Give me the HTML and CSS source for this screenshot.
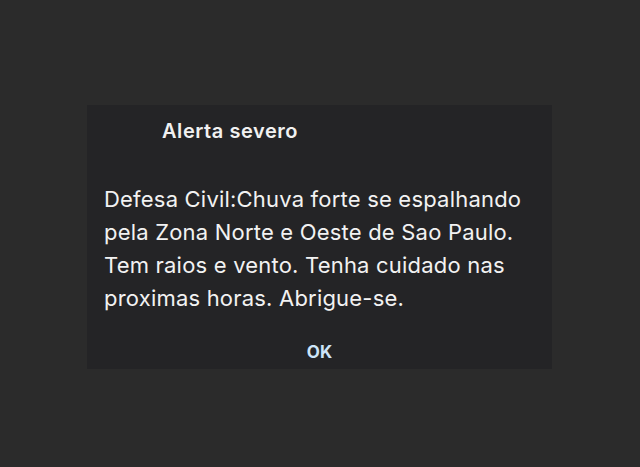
FILE: index.html
```html
<!DOCTYPE html>
<html>
<head>
<meta charset="utf-8">
<link rel="stylesheet" href="styles.css">
</head>
<body>
<div class="screen">
  <div class="dialog">
    <div class="title">Alerta severo</div>
    <div class="message">Defesa Civil:Chuva forte se espalhando<br>pela Zona Norte e Oeste de Sao Paulo.<br>Tem raios e vento. Tenha cuidado nas<br>proximas horas. Abrigue-se.</div>
    <div class="actions"><span class="ok">OK</span></div>
  </div>
</div>
</body>
</html>
```
FILE: styles.css
```css
html, body {
  margin: 0;
  padding: 0;
  background: #2b2b2b;
}
.screen {
  width: 640px;
  height: 467px;
  padding-top: 105px;
  padding-left: 87px;
  box-sizing: border-box;
  font-family: Inter, "Open Sans", sans-serif;
}
.dialog {
  width: 465px;
  height: 264px;
  background: #242426;
  box-sizing: border-box;
  padding: 12.5px 0 0 0;
  display: flex;
  flex-direction: column;
}
.title {
  color: #f1f1f1;
  font-size: 20px;
  font-weight: 600;
  letter-spacing: 0.55px;
  padding-left: 75px;
  line-height: 26px;
}
.message {
  color: #f2f2f2;
  font-size: 22px;
  letter-spacing: 0.2px;
  line-height: 33px;
  margin-top: 39px;
  padding-left: 17px;
  white-space: nowrap;
}
.actions {
  display: flex;
  justify-content: center;
  margin-top: 25px;
}
.ok {
  color: #cde4f8;
  font-size: 17px;
  font-weight: 700;
  line-height: 24px;
}
```
